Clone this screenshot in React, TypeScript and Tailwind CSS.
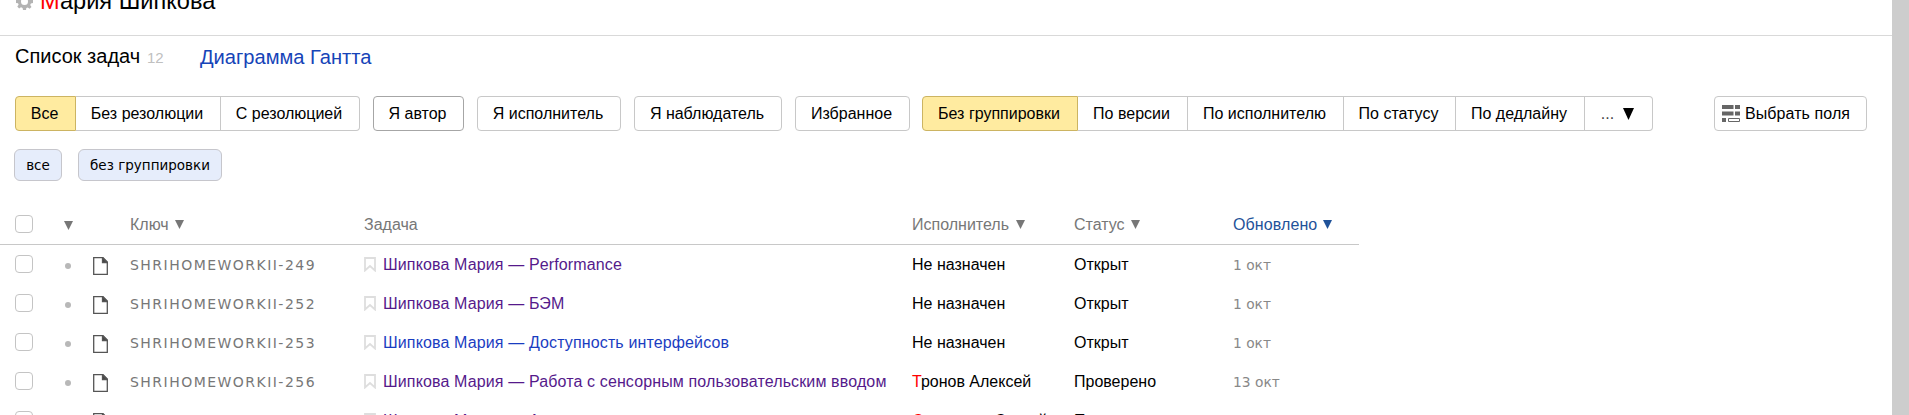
import React from "react";

const verdana = "font-['DejaVu_Sans',sans-serif]";

function Seg({ w, active, first, last, dark, children }: { w: string; active?: boolean; first?: boolean; last?: boolean; dark?: boolean; children: React.ReactNode }) {
  return (
    <button
      type="button"
      className={[
        "h-[35px] shrink-0 border pr-[2px] text-center text-[16px] leading-[33px] whitespace-nowrap text-black",
        w,
        active ? "border-[#ccb462] bg-[#ffeba0]" : dark ? "border-[#a6a6a6] bg-white" : "border-[#c8c8c8] bg-white",
        first ? "rounded-l-[4px]" : "border-l-0",
        last ? "rounded-r-[4px]" : "",
      ].join(" ")}
    >
      {children}
    </button>
  );
}

function Arrow({ big }: { big?: boolean }) {
  return (
    <svg className={big ? "h-[12px] w-[11px]" : "h-[9px] w-[9px]"} viewBox="0 0 10 10" preserveAspectRatio="none" fill="currentColor">
      <path d="M0 0h10L5 10z" />
    </svg>
  );
}

function Checkbox() {
  return <span className="block size-[18px] rounded-[4px] border border-[#c4c4c4] bg-white" />;
}

const rows = [
  { key: "249", title: "Performance", who: "Не назначен", status: "Открыт", date: "1 окт", visited: true },
  { key: "252", title: "БЭМ", who: "Не назначен", status: "Открыт", date: "1 окт", visited: true },
  { key: "253", title: "Доступность интерфейсов", who: "Не назначен", status: "Открыт", date: "1 окт", visited: false },
  { key: "256", title: "Работа с сенсорным пользовательским вводом", who: "Тронов Алексей", status: "Проверено", date: "13 окт", visited: true, red: true },
  { key: "257", title: "Адаптивность", who: "Сергиенко Сергей", status: "Проверено", date: "13 окт", visited: true, red: true },
];

const cols = "grid grid-cols-[15px_46px_32px_37px_234px_548px_162px_159px_126px]";

export default function App() {
  return (
    <div className="flex h-[415px] w-[1909px] overflow-hidden bg-white font-['Liberation_Sans',Arial,sans-serif] text-[16px] text-black">
      <div className="w-[1892px] shrink-0 overflow-hidden">
        <div className="flex h-[36px] border-b border-[#d9d9d9] pl-[16px]">
          <svg className="-mt-[7px] size-[17px]" viewBox="0 0 17 17" fill="#b3b3b3">
            <path fillRule="evenodd" d="M7 0h3l.4 2.2 1.6.7L13.900 1.600 15.700 3.500 14.300 5.300 14.900 6.800 17 7v3l-2.100.4-.7 1.600 1.300 1.900-1.900 1.800-1.800-1.300-1.500.6L10 17H7l-.4-2.100-1.600-.7-1.900 1.300-1.800-1.900 1.300-1.800-.6-1.500L0 10V7l2.100-.4.700-1.600L1.500 3.100l1.900-1.800 1.800 1.300L6.700 2zM8.500 5a3.500 3.500 0 1 0 0 7 3.500 3.500 0 0 0 0-7z" />
          </svg>
          <h1 className="-mt-[13px] ml-[7px] text-[23.6px] leading-[28px] whitespace-nowrap"><span className="text-[#f00]">М</span>ария Шипкова</h1>
        </div>
        <div className="flex h-[60px] items-start pt-[7px] pl-[15px] leading-[26px] whitespace-nowrap">
          <span className="w-[132px] text-[20px]">Список задач</span>
          <span className="w-[53px] pt-[2px] text-[15px] text-[#c0c0c0]">12</span>
          <a className="pt-[1px] text-[20.1px] leading-[27px] text-[#1644b8]">Диаграмма Гантта</a>
        </div>
        <div className="flex h-[35px] pl-[15px]">
          <Seg w="w-[61px]" active first>Все</Seg>
          <Seg w="w-[145px]">Без резолюции</Seg>
          <Seg w="w-[139px]" last>С резолюцией</Seg>
          <span className="w-[13px]" />
          <Seg w="w-[91px]" first last dark>Я автор</Seg>
          <span className="w-[13px]" />
          <Seg w="w-[144px]" first last>Я исполнитель</Seg>
          <span className="w-[13px]" />
          <Seg w="w-[148px]" first last>Я наблюдатель</Seg>
          <span className="w-[13px]" />
          <Seg w="w-[115px]" first last>Избранное</Seg>
          <span className="w-[12px]" />
          <Seg w="w-[156px]" active first>Без группировки</Seg>
          <Seg w="w-[110px]">По версии</Seg>
          <Seg w="w-[156px]">По исполнителю</Seg>
          <Seg w="w-[112px]">По статусу</Seg>
          <Seg w="w-[129px]">По дедлайну</Seg>
          <Seg w="w-[68px]" last>
            <span className="flex items-center justify-center gap-[9px]"><span className="text-[#444]">...</span> <Arrow big /></span>
          </Seg>
          <span className="w-[61px]" />
          <Seg w="w-[153px]" first last>
            <span className="flex items-center pl-[7px]">
              <svg className="mr-[5px] h-[17px] w-[18px]" viewBox="0 0 18 17" fill="#666">
                <path d="M0 0h11.500v4H0zM13 0h5v4h-5zM0 6.500h11.500v4H0zM13 6.500h5v4h-5zM0 13h4v4H0z" />
                <path d="M6.500 13.500h11v3h-11z" fill="none" stroke="#666" />
              </svg>
              <span className="tracking-[0.08px]">Выбрать поля</span>
            </span>
          </Seg>
        </div>
        <div className={`flex gap-[16px] pt-[18px] pl-[14px] text-[13.500px] leading-[30px] ${verdana}`}>
          <span className="h-[32px] w-[48px] rounded-[6px] border border-[#c6c6cc] bg-[#e6edfb] text-center">все</span>
          <span className="h-[32px] w-[144px] rounded-[6px] border border-[#c6c6cc] bg-[#e6edfb] text-center whitespace-nowrap">без группировки</span>
        </div>
        <div className={`${cols} mt-[24px] h-[40px] w-[1359px] border-b border-[#c8c8c8] leading-[39px] whitespace-nowrap text-[#777]`}>
          <span />
          <span className="pt-[10px]"><Checkbox /></span>
          <span className="flex items-center pt-px pl-[3px]"><Arrow /></span>
          <span />
          <span className="flex items-center gap-[6px]">Ключ <Arrow /></span>
          <span>Задача</span>
          <span className="flex items-center gap-[7px]">Исполнитель <Arrow /></span>
          <span className="flex items-center gap-[6px]">Статус <Arrow /></span>
          <span className="flex items-center gap-[6px] text-[#1f5299]"><span className="tracking-[0.1px]">Обновлено</span> <Arrow /></span>
        </div>
        {rows.map((r) => (
          <div key={r.key} className={`${cols} h-[39px] w-[1359px] leading-[39px] whitespace-nowrap`}>
            <span />
            <span className="pt-[10px]"><Checkbox /></span>
            <span className="pt-[18px] pl-[4px]"><span className="block size-[6px] rounded-full bg-[#b8b8b8]" /></span>
            <span className="pt-[12px]">
              <svg className="h-[18px] w-[15px]" viewBox="0 0 15 18" fill="none" stroke="#555" strokeWidth="1.300">
                <path d="M.7.700h9.300l4.300 4.300v12.300H.7z" />
                <path d="M9.500 .7v4.800h4.800z" fill="#444" />
              </svg>
            </span>
            <span className={`pt-px text-[14px] tracking-[1.470px] text-[#777] ${verdana}`}>SHRIHOMEWORKII-{r.key}</span>
            <span className={r.visited ? "flex tracking-[0.13px] text-[#551a8b]" : "flex tracking-[0.13px] text-[#1a3dc1]"}>
              <svg className="mt-[12px] mr-[7px] h-[15px] w-[12px]" viewBox="0 0 12 15" fill="none" stroke="#dedede" strokeWidth="1.800">
                <path d="M1 1h10v12.500L6 9l-5 4.500z" />
              </svg>
              Шипкова Мария — {r.title}
            </span>
            <span>{r.red ? <><span className="text-[#f00]">{r.who[0]}</span>{r.who.slice(1)}</> : r.who}</span>
            <span>{r.status}</span>
            <span className={`pt-px text-[13.800px] text-[#888] ${verdana}`}>{r.date}</span>
          </div>
        ))}
      </div>
      <div className="flex-1 bg-[#cdcdcd]" />
    </div>
  );
}
